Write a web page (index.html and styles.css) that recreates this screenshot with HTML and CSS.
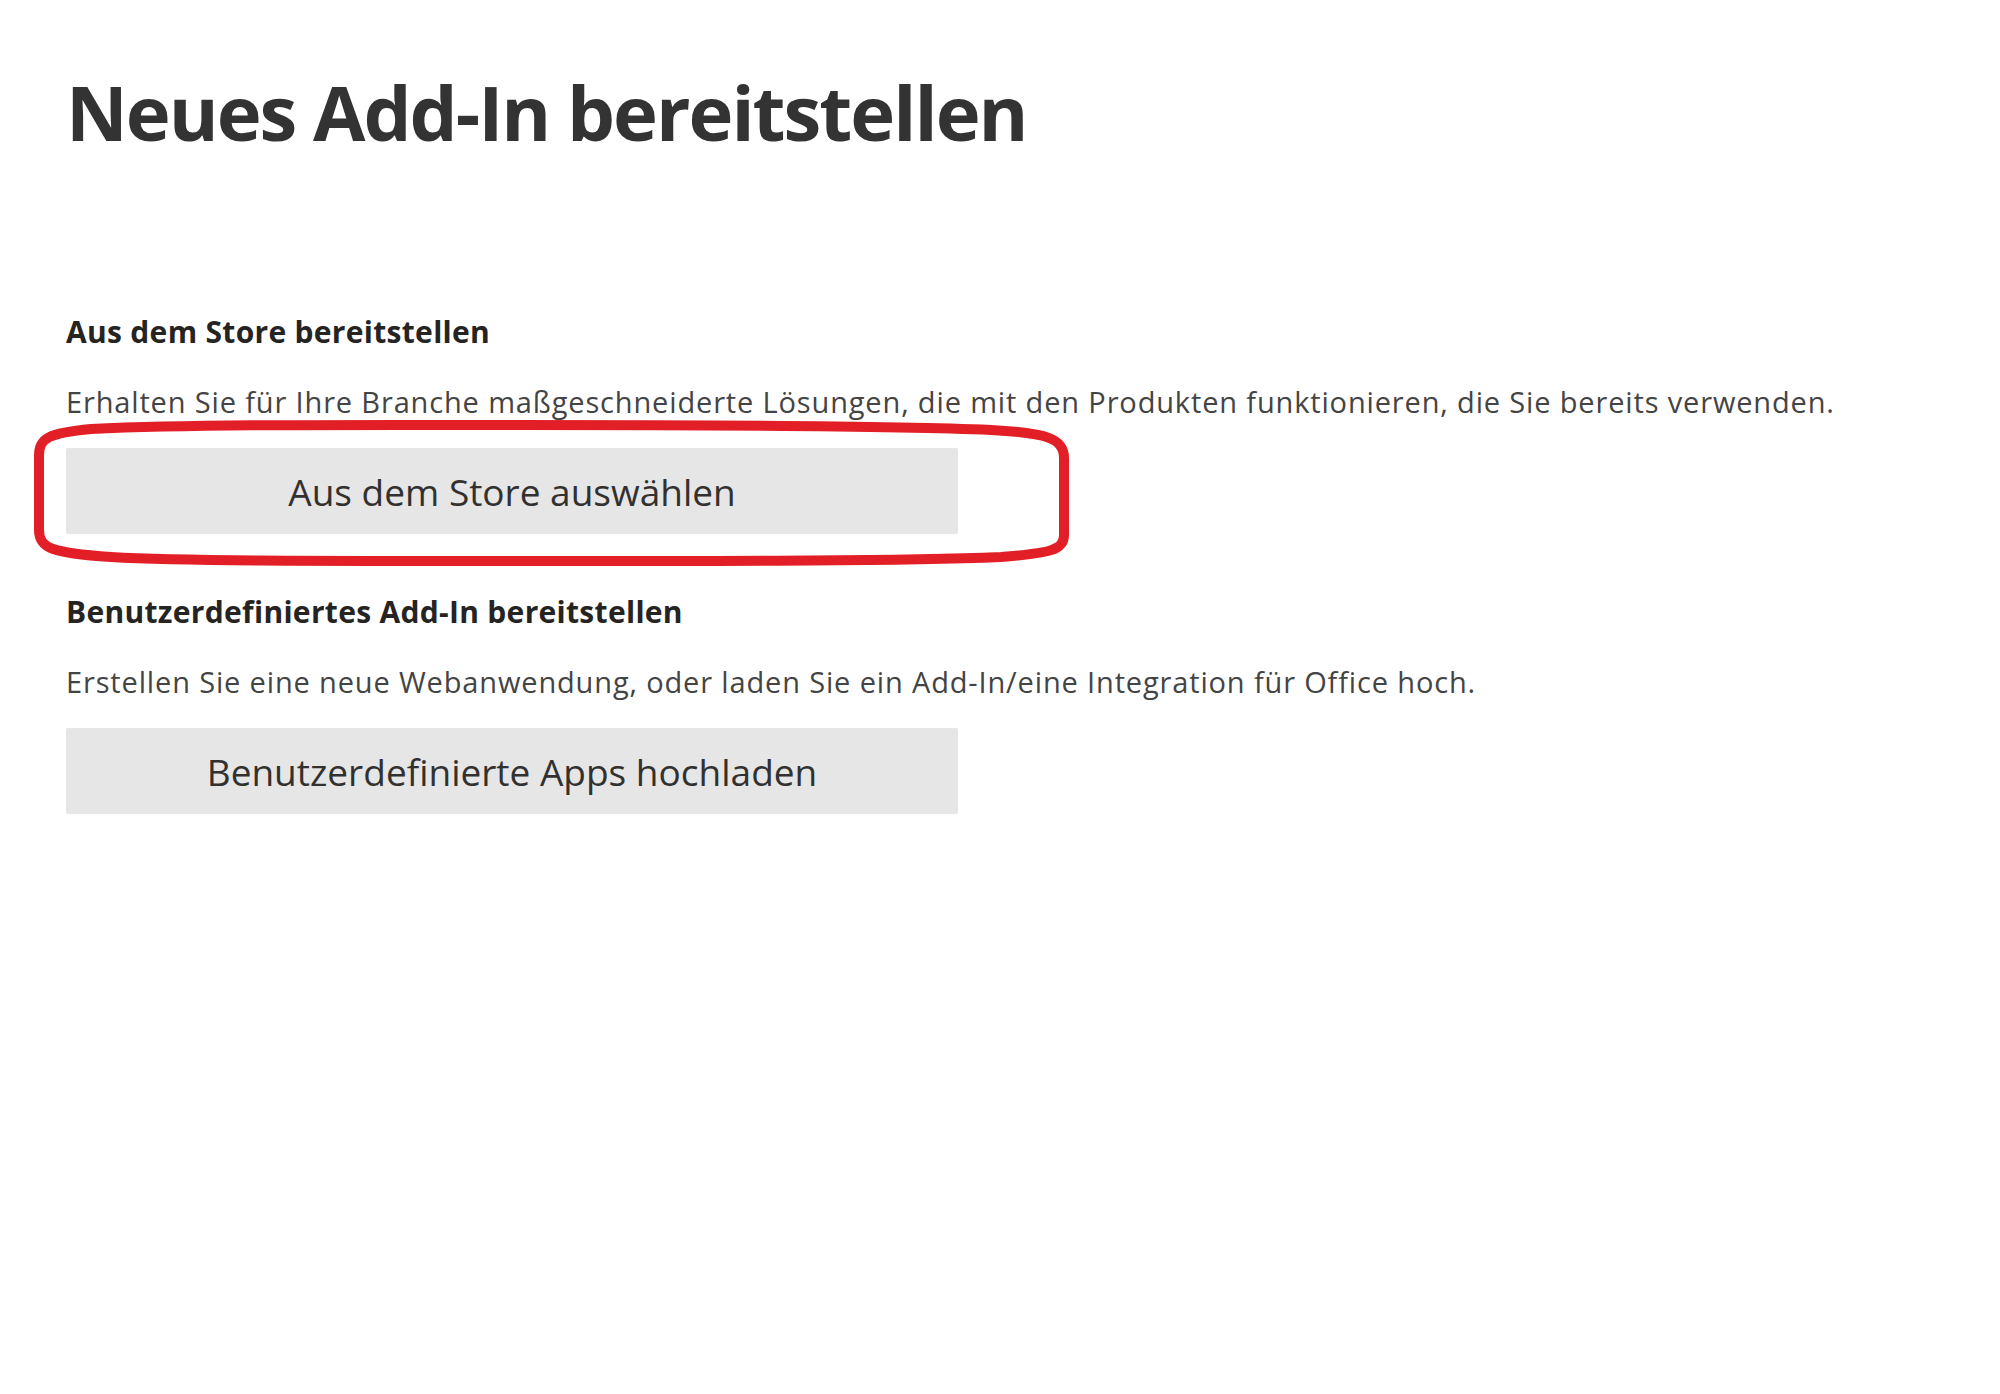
FILE: index.html
```html
<!DOCTYPE html>
<html lang="de">
<head>
<meta charset="utf-8">
<title>Neues Add-In bereitstellen</title>
<link rel="stylesheet" href="styles.css">
</head>
<body>
<main class="page">
  <h1 class="title">Neues Add-In bereitstellen</h1>

  <section class="section section-store">
    <h2 class="section-heading">Aus dem Store bereitstellen</h2>
    <p class="section-desc">Erhalten Sie für Ihre Branche maßgeschneiderte Lösungen, die mit den Produkten funktionieren, die Sie bereits verwenden.</p>
    <div class="button-wrap">
      <button class="action-button" type="button">Aus dem Store auswählen</button>
      <svg class="highlight" viewBox="28 413 1045 160" width="1045" height="160" aria-hidden="true">
        <path d="M 38 455 C 38 438, 48 433, 90 429 C 200 424, 350 425, 520 425 C 750 425, 900 426, 990 430 C 1045 433, 1063 438, 1063 458 L 1063 535 C 1063 550, 1050 553, 1000 557 C 900 561, 750 561, 520 561 C 300 561, 180 561, 110 557 C 50 553, 38 548, 38 530 Z" fill="none" stroke="#e21f26" stroke-width="10"/>
      </svg>
    </div>
  </section>

  <section class="section section-custom">
    <h2 class="section-heading">Benutzerdefiniertes Add-In bereitstellen</h2>
    <p class="section-desc">Erstellen Sie eine neue Webanwendung, oder laden Sie ein Add-In/eine Integration für Office hoch.</p>
    <div class="button-wrap">
      <button class="action-button" type="button">Benutzerdefinierte Apps hochladen</button>
    </div>
  </section>
</main>
</body>
</html>
```
FILE: styles.css
```css
html, body {
  margin: 0;
  padding: 0;
  background: #ffffff;
}

body {
  font-family: "Open Sans", "Noto Sans", "Liberation Sans", sans-serif;
  color: #323130;
}

.page {
  display: flex;
  flex-direction: column;
  padding: 66px 0 0 66px;
}

.title {
  margin: 0;
  font-size: 76px;
  line-height: 91px;
  font-weight: 700;
  letter-spacing: -2px;
  color: #333333;
}

.section {
  display: flex;
  flex-direction: column;
}

.section-store {
  margin-top: 155px;
}

.section-custom {
  margin-top: 58px;
}

.section-heading {
  margin: 0;
  font-size: 30px;
  line-height: 40px;
  font-weight: 700;
  letter-spacing: 0.3px;
  color: #252423;
}

.section-desc {
  margin: 30px 0 0 0;
  font-size: 29px;
  line-height: 40px;
  font-weight: 400;
  letter-spacing: 0.85px;
  color: #444444;
}

.button-wrap {
  position: relative;
  margin-top: 26px;
  width: 892px;
}

.action-button {
  display: block;
  width: 892px;
  height: 86px;
  border: none;
  border-radius: 2px;
  background: #e6e6e6;
  font-family: inherit;
  font-size: 37px;
  font-weight: 400;
  color: #323130;
  padding: 0;
}

.highlight {
  position: absolute;
  left: -37px;
  top: -35px;
  pointer-events: none;
}
```
